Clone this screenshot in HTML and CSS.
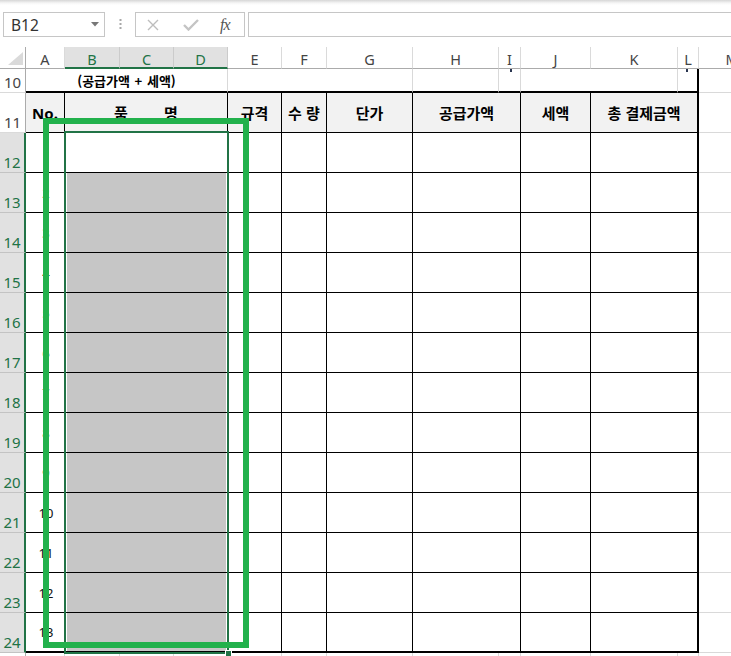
FILE: index.html
```html
<!DOCTYPE html>
<html lang="ko">
<head>
<meta charset="utf-8">
<title>Excel</title>
<link rel="stylesheet" href="styles.css">
</head>
<body>
<div class="fbar">
  <div class="namebox"><span class="nb-text">B12</span><svg class="nb-arrow" width="8" height="5" viewBox="0 0 8 5"><path d="M0 0H8L4 4.5Z" fill="#777"/></svg></div>
  <svg class="grip" width="3" height="12" viewBox="0 0 3 12"><rect x="0.5" y="0" width="2" height="2" fill="#a8a8a8"/><rect x="0.5" y="4" width="2" height="2" fill="#a8a8a8"/><rect x="0.5" y="8" width="2" height="2" fill="#a8a8a8"/></svg>
  <div class="fbtns">
    <svg class="ic-x" width="12" height="12" viewBox="0 0 12 12"><path d="M1 1L11 11M11 1L1 11" stroke="#bdbdbd" stroke-width="1.4" fill="none"/></svg>
    <svg class="ic-ok" width="16" height="12" viewBox="0 0 16 12"><path d="M1 6L5.5 10.5L15 1" stroke="#c4c4c4" stroke-width="2.4" fill="none"/></svg>
    <span class="ic-fx">fx</span>
  </div>
  <div class="finput"></div>
</div>

<div class="sheet">
  <!-- column headers -->
  <div class="corner"><svg width="25" height="21" viewBox="0 0 25 21"><path d="M23 5V18H8Z" fill="#dadada"/></svg></div>
  <div class="ch">A</div>
  <div class="ch sel">B</div>
  <div class="ch sel">C</div>
  <div class="ch sel">D</div>
  <div class="ch">E</div>
  <div class="ch">F</div>
  <div class="ch">G</div>
  <div class="ch">H</div>
  <div class="ch">I</div>
  <div class="ch">J</div>
  <div class="ch">K</div>
  <div class="ch">L</div>
  <div class="ch mcol">M</div>

  <!-- row 10 -->
  <div class="rh">10</div>
  <div class="g r10 s4 note">(공급가액 + 세액)</div>
  <div class="g r10 s3"></div>
  <div class="g r10"></div>
  <div class="g r10 tick tick-i"></div>
  <div class="g r10 s2"></div>
  <div class="g r10 tr2 tick tick-l"></div>
  <div class="g"></div>

  <!-- row 11 -->
  <div class="rh">11</div>
  <div class="t hd no">No.</div>
  <div class="t hd s3 pm">품 명</div>
  <div class="t hd">규격</div>
  <div class="t hd">수 량</div>
  <div class="t hd">단가</div>
  <div class="t hd s2">공급가액</div>
  <div class="t hd">세액</div>
  <div class="t hd s2 tr2">총 결제금액</div>
  <div class="g"></div>

  <!-- row 12 -->
  <div class="rh sel">12</div>
  <div class="t num">1</div>
  <div class="t s3"></div>
  <div class="t"></div><div class="t"></div><div class="t"></div>
  <div class="t s2"></div><div class="t"></div><div class="t s2 tr2"></div>
  <div class="g"></div>

  <!-- row 13 -->
  <div class="rh sel">13</div>
  <div class="t num">2</div>
  <div class="t s3 gray"></div>
  <div class="t"></div><div class="t"></div><div class="t"></div>
  <div class="t s2"></div><div class="t"></div><div class="t s2 tr2"></div>
  <div class="g"></div>

  <!-- row 14 -->
  <div class="rh sel">14</div>
  <div class="t num">3</div>
  <div class="t s3 gray"></div>
  <div class="t"></div><div class="t"></div><div class="t"></div>
  <div class="t s2"></div><div class="t"></div><div class="t s2 tr2"></div>
  <div class="g"></div>

  <!-- row 15 -->
  <div class="rh sel">15</div>
  <div class="t num">4</div>
  <div class="t s3 gray"></div>
  <div class="t"></div><div class="t"></div><div class="t"></div>
  <div class="t s2"></div><div class="t"></div><div class="t s2 tr2"></div>
  <div class="g"></div>

  <!-- row 16 -->
  <div class="rh sel">16</div>
  <div class="t num">5</div>
  <div class="t s3 gray"></div>
  <div class="t"></div><div class="t"></div><div class="t"></div>
  <div class="t s2"></div><div class="t"></div><div class="t s2 tr2"></div>
  <div class="g"></div>

  <!-- row 17 -->
  <div class="rh sel">17</div>
  <div class="t num">6</div>
  <div class="t s3 gray"></div>
  <div class="t"></div><div class="t"></div><div class="t"></div>
  <div class="t s2"></div><div class="t"></div><div class="t s2 tr2"></div>
  <div class="g"></div>

  <!-- row 18 -->
  <div class="rh sel">18</div>
  <div class="t num">7</div>
  <div class="t s3 gray"></div>
  <div class="t"></div><div class="t"></div><div class="t"></div>
  <div class="t s2"></div><div class="t"></div><div class="t s2 tr2"></div>
  <div class="g"></div>

  <!-- row 19 -->
  <div class="rh sel">19</div>
  <div class="t num">8</div>
  <div class="t s3 gray"></div>
  <div class="t"></div><div class="t"></div><div class="t"></div>
  <div class="t s2"></div><div class="t"></div><div class="t s2 tr2"></div>
  <div class="g"></div>

  <!-- row 20 -->
  <div class="rh sel">20</div>
  <div class="t num">9</div>
  <div class="t s3 gray"></div>
  <div class="t"></div><div class="t"></div><div class="t"></div>
  <div class="t s2"></div><div class="t"></div><div class="t s2 tr2"></div>
  <div class="g"></div>

  <!-- row 21 -->
  <div class="rh sel">21</div>
  <div class="t num">10</div>
  <div class="t s3 gray"></div>
  <div class="t"></div><div class="t"></div><div class="t"></div>
  <div class="t s2"></div><div class="t"></div><div class="t s2 tr2"></div>
  <div class="g"></div>

  <!-- row 22 -->
  <div class="rh sel">22</div>
  <div class="t num">11</div>
  <div class="t s3 gray"></div>
  <div class="t"></div><div class="t"></div><div class="t"></div>
  <div class="t s2"></div><div class="t"></div><div class="t s2 tr2"></div>
  <div class="g"></div>

  <!-- row 23 -->
  <div class="rh sel">23</div>
  <div class="t num">12</div>
  <div class="t s3 gray"></div>
  <div class="t"></div><div class="t"></div><div class="t"></div>
  <div class="t s2"></div><div class="t"></div><div class="t s2 tr2"></div>
  <div class="g"></div>

  <!-- row 24 -->
  <div class="rh sel">24</div>
  <div class="t bb2 num">13</div>
  <div class="t bb2 s3 gray"></div>
  <div class="t bb2"></div><div class="t bb2"></div><div class="t bb2"></div>
  <div class="t bb2 s2"></div><div class="t bb2"></div><div class="t bb2 s2 tr2"></div>
  <div class="g"></div>

  <!-- row 25 (only its top edge is in view) -->
  <div class="rh"></div>
  <div class="g"></div><div class="g"></div><div class="g"></div><div class="g"></div>
  <div class="g"></div><div class="g"></div><div class="g"></div><div class="g"></div>
  <div class="g"></div><div class="g"></div><div class="g"></div><div class="g"></div>
  <div class="g"></div>

  <!-- overlays -->
  <div class="selection"></div>
  <div class="handle"></div>
  <div class="annot"></div>
</div>
</body>
</html>
```

FILE: styles.css
```css
html, body {
  margin: 0;
  padding: 0;
}
body {
  width: 731px;
  height: 656px;
  overflow: hidden;
  background: #fff;
  font-family: "Noto Sans", "Open Sans", sans-serif;
}

/* ---------- formula bar ---------- */
.fbar {
  box-sizing: border-box;
  height: 47px;
  padding-top: 12px;
  display: flex;
  align-items: flex-start;
  background: linear-gradient(#d6d6d6, #f6f6f6 3px, #fff 5px);
}
.namebox {
  box-sizing: border-box;
  margin-left: 3px;
  width: 102px;
  height: 25px;
  border: 1px solid #c6c6c6;
  background: #fff;
  display: flex;
  align-items: center;
  padding: 0 5px 0 7px;
}
.nb-text {
  font-size: 15.5px;
  color: #333;
  line-height: 18px;
}
.nb-arrow {
  margin-left: auto;
  display: block;
}
.grip {
  display: block;
  margin: 7px 0 0 14px;
}
.fbtns {
  box-sizing: border-box;
  margin-left: 13px;
  width: 110px;
  height: 25px;
  border: 1px solid #c6c6c6;
  display: flex;
  align-items: center;
  padding-left: 11px;
}
.fbtns svg {
  display: block;
}
.ic-ok {
  margin-left: 24px;
}
.ic-fx {
  margin-left: 21px;
  font-family: "Liberation Serif", "DejaVu Serif", serif;
  font-style: italic;
  font-size: 16px;
  letter-spacing: -1px;
  color: #555;
  line-height: 18px;
}
.finput {
  box-sizing: border-box;
  margin-left: 3px;
  margin-right: -6px;
  flex: 1;
  height: 25px;
  border: 1px solid #c6c6c6;
}

/* ---------- sheet grid ---------- */
.sheet {
  position: relative;
  display: grid;
  grid-template-columns: 26px 39px 55px 54px 54px 54px 45px 86px 86px 22px 70px 87px 21px 66px;
  grid-template-rows: 22px 24px 40px repeat(14, 40px);
  width: 765px;
}
.sheet > div {
  box-sizing: border-box;
  min-width: 0;
}
.s2 { grid-column: span 2; }
.s3 { grid-column: span 3; }
.s4 { grid-column: span 4; }

.corner {
  border-right: 1px solid #ababab;
  border-bottom: 1px solid #ababab;
}
.corner svg { display: block; }

.ch {
  border-right: 1px solid #dadada;
  border-bottom: 1px solid #ababab;
  display: flex;
  justify-content: center;
  align-items: flex-end;
  padding-bottom: 1px;
  font-size: 14.5px;
  line-height: 16px;
  color: #444;
}
.ch.sel {
  background: #e1e1e1;
  color: #217346;
  border-bottom: 2px solid #217346;
  border-right-color: #cbcbcb;
  padding-bottom: 0;
}
.ch.mcol {
  border-right: none;
}

.rh {
  border-right: 1px solid #ababab;
  border-bottom: 1px solid #dadada;
  display: flex;
  justify-content: center;
  align-items: flex-end;
  padding-bottom: 2px;
  font-size: 15px;
  line-height: 16px;
  color: #444;
}
.rh.sel {
  background: #e1e1e1;
  color: #217346;
  border-right: 2px solid #217346;
  border-bottom-color: #c3c3c3;
}

/* plain cell with gridlines */
.g {
  border-right: 1px solid #d9d9d9;
  border-bottom: 1px solid #d9d9d9;
}
.r10 {
  border-bottom: 2px solid #000;
}
.tick {
  position: relative;
}
.tick::before {
  content: "";
  position: absolute;
  top: 0;
  width: 2px;
  height: 3px;
  background: #2a3550;
}
.tick-i::before { left: 11px; }
.tick-l::before { left: 8px; }

/* table cells */
.t {
  border-right: 1px solid #000;
  border-bottom: 1px solid #000;
}
.sheet > .tr2 {
  border-right: 2px solid #000;
}
.sheet > .bb2 {
  border-bottom: 2px solid #000;
}

.note {
  display: flex;
  align-items: center;
  justify-content: center;
  font-family: "Noto Sans CJK KR", sans-serif;
  font-weight: 700;
  font-size: 13px;
  word-spacing: 1px;
  color: #000;
}
.hd {
  background: #f2f2f2;
  display: flex;
  align-items: center;
  justify-content: center;
  font-family: "Noto Sans CJK KR", sans-serif;
  font-weight: 700;
  font-size: 15px;
  color: #000;
  white-space: pre;
}
.hd.no {
  font-family: "Noto Sans", "Noto Sans CJK KR", sans-serif;
  font-size: 15px;
  padding-top: 1px;
}
.pm {
  word-spacing: 32px;
}
.num {
  display: flex;
  align-items: center;
  justify-content: center;
  padding-left: 2px;
  font-size: 13px;
  color: #111;
}
.gray {
  background: #c6c6c6;
  box-shadow: inset 2px 0 #fff, inset -1px 0 #fff;
}

/* ---------- overlays ---------- */
.selection {
  position: absolute;
  left: 64px;
  top: 84px;
  width: 165px;
  height: 523px;
  box-sizing: border-box;
  border: 2px solid #217346;
}
.handle {
  position: absolute;
  left: 225px;
  top: 603px;
  width: 7px;
  height: 7px;
  box-sizing: border-box;
  background: #217346;
  border: 1px solid #fff;
}
.annot {
  position: absolute;
  left: 43px;
  top: 71px;
  width: 206px;
  height: 530px;
  box-sizing: border-box;
  border: 6px solid #22b14c;
}
```
